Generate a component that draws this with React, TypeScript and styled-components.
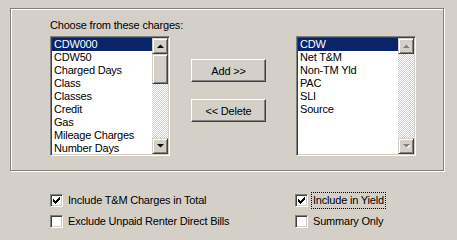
import React from 'react';
import styled, { createGlobalStyle } from 'styled-components';

const Global = createGlobalStyle`
  html, body { margin: 0; padding: 0; background: #d4d0c8; }
  body { font-family: "Liberation Sans", Arial, sans-serif; font-size: 11px; letter-spacing: -0.2px; color: #000; }
`;

const Page = styled.div`
  width: 457px;
  height: 240px;
  padding: 8px 0 0 10px;
  box-sizing: border-box;
  overflow: hidden;
`;

const GroupBox = styled.div`
  width: 434px;
  height: 163px;
  box-sizing: border-box;
  border: 1px solid #808080;
  box-shadow: 1px 1px 0 #fff, inset 1px 1px 0 #fff;
  padding: 10px 0 0 39px;
  display: flex;
  align-items: flex-start;
`;

const Column = styled.div<{ $gap?: number }>`
  width: 120px;
  margin-left: ${p => p.$gap || 0}px;
  display: flex;
  flex-direction: column;
`;

const Caption = styled.div`
  height: 13px;
  line-height: 13px;
  margin-bottom: 4px;
  white-space: nowrap;
`;

const ListBox = styled.div<{ $offset?: number }>`
  width: 120px;
  height: 120px;
  box-sizing: border-box;
  margin-top: ${p => p.$offset || 0}px;
  border: 1px solid;
  border-color: #808080 #fff #fff #808080;
  box-shadow: inset 1px 1px 0 #404040, inset -1px -1px 0 #d4d0c8;
  padding: 1px;
  background: #fff;
  display: flex;
  overflow: hidden;
`;

const Items = styled.div`
  flex: 1;
  overflow: hidden;
`;

const Item = styled.div<{ $selected?: boolean }>`
  height: 13px;
  line-height: 13px;
  padding-left: 2px;
  white-space: nowrap;
  background: ${p => (p.$selected ? '#0a246a' : 'transparent')};
  color: ${p => (p.$selected ? '#fff' : '#000')};
`;

const ScrollBar = styled.div`
  width: 16px;
  display: flex;
  flex-direction: column;
  background: repeating-conic-gradient(#d4d0c8 0 25%, #fff 0 50%) 0 0 / 2px 2px;
`;

const Raised = styled.div<{ $h: number }>`
  height: ${p => p.$h}px;
  box-sizing: border-box;
  background: #d4d0c8;
  border: 1px solid;
  border-color: #d4d0c8 #404040 #404040 #d4d0c8;
  box-shadow: inset 1px 1px 0 #fff, inset -1px -1px 0 #808080;
  display: flex;
  align-items: center;
  justify-content: center;
`;

const Track = styled.div`
  flex: 1;
`;

const ButtonColumn = styled.div`
  display: flex;
  flex-direction: column;
  gap: 17px;
  margin: 40px 0 0 21px;
`;

const PushButton = styled.button`
  width: 75px;
  height: 23px;
  padding: 0;
  font-family: "Liberation Sans", Arial, sans-serif;
  font-size: 11px;
  letter-spacing: -0.2px;
  color: #000;
  background: #d4d0c8;
  border: 1px solid;
  border-color: #fff #404040 #404040 #fff;
  box-shadow: inset -1px -1px 0 #808080;
  border-radius: 0;
`;

const Options = styled.div`
  display: grid;
  grid-template-columns: 245px auto;
  row-gap: 4px;
  margin: 21px 0 0 40px;
`;

const Option = styled.div`
  height: 17px;
  display: flex;
  align-items: center;
  white-space: nowrap;
`;

const Box = styled.div`
  width: 13px;
  height: 13px;
  box-sizing: border-box;
  border: 1px solid;
  border-color: #808080 #fff #fff #808080;
  box-shadow: inset 1px 1px 0 #404040, inset -1px -1px 0 #d4d0c8;
  background: #fff;
  display: flex;
  align-items: center;
  justify-content: center;
`;

const OptionText = styled.span<{ $focused?: boolean }>`
  margin-left: 3px;
  padding: 0 1px;
  height: 15px;
  line-height: 15px;
  border: 1px dotted ${p => (p.$focused ? '#000' : 'transparent')};
`;

const Arrow = ({ down, disabled }: { down?: boolean; disabled?: boolean }) => (
  <svg width="7" height="4" viewBox="0 0 7 4" style={{ display: 'block' }}>
    {disabled && (
      <polygon
        points={down ? '1,1 8,1 4.5,4.5' : '4.5,0.5 8,4 1,4'}
        fill="#fff"
      />
    )}
    <polygon
      points={down ? '0,0 7,0 3.5,3.5' : '3.5,0.5 7,4 0,4'}
      fill={disabled ? '#808080' : '#000'}
    />
  </svg>
);

const CHECK = ['......X', '.....XX', 'X...XXX', 'XX.XXX.', 'XXXXX..', '.XXX...', '..X....'];

const Check = () => (
  <svg width="7" height="7" viewBox="0 0 7 7" style={{ display: 'block' }}>
    {CHECK.flatMap((row, y) =>
      row.split('').map((c, x) => (c === 'X' ? <rect key={`${x}-${y}`} x={x} y={y} width="1" height="1" fill="#000" /> : null))
    )}
  </svg>
);

const List = ({ items, thumb, offset }: { items: string[]; thumb: boolean; offset?: number }) => (
  <ListBox $offset={offset}>
    <Items>
      {items.map((t, i) => (
        <Item key={t} $selected={i === 0}>{t}</Item>
      ))}
    </Items>
    <ScrollBar>
      <Raised $h={16}><Arrow disabled={!thumb} /></Raised>
      {thumb && <Raised $h={30} />}
      <Track />
      <Raised $h={16}><Arrow down disabled={!thumb} /></Raised>
    </ScrollBar>
  </ListBox>
);

const CheckOption = ({ label, checked, focused }: { label: string; checked?: boolean; focused?: boolean }) => (
  <Option>
    <Box>{checked && <Check />}</Box>
    <OptionText $focused={focused}>{label}</OptionText>
  </Option>
);

const available = ['CDW000', 'CDW50', 'Charged Days', 'Class', 'Classes', 'Credit', 'Gas', 'Mileage Charges', 'Number Days'];
const chosen = ['CDW', 'Net T&M', 'Non-TM Yld', 'PAC', 'SLI', 'Source'];

export default function App() {
  return (
    <Page>
      <Global />
      <GroupBox>
        <Column>
          <Caption>Choose from these charges:</Caption>
          <List items={available} thumb />
        </Column>
        <ButtonColumn>
          <PushButton>Add &gt;&gt;</PushButton>
          <PushButton>&lt;&lt; Delete</PushButton>
        </ButtonColumn>
        <Column $gap={30}>
          <List items={chosen} thumb={false} offset={17} />
        </Column>
      </GroupBox>
      <Options>
        <CheckOption label="Include T&M Charges in Total" checked />
        <CheckOption label="Include in Yield" checked focused />
        <CheckOption label="Exclude Unpaid Renter Direct Bills" />
        <CheckOption label="Summary Only" />
      </Options>
    </Page>
  );
}
